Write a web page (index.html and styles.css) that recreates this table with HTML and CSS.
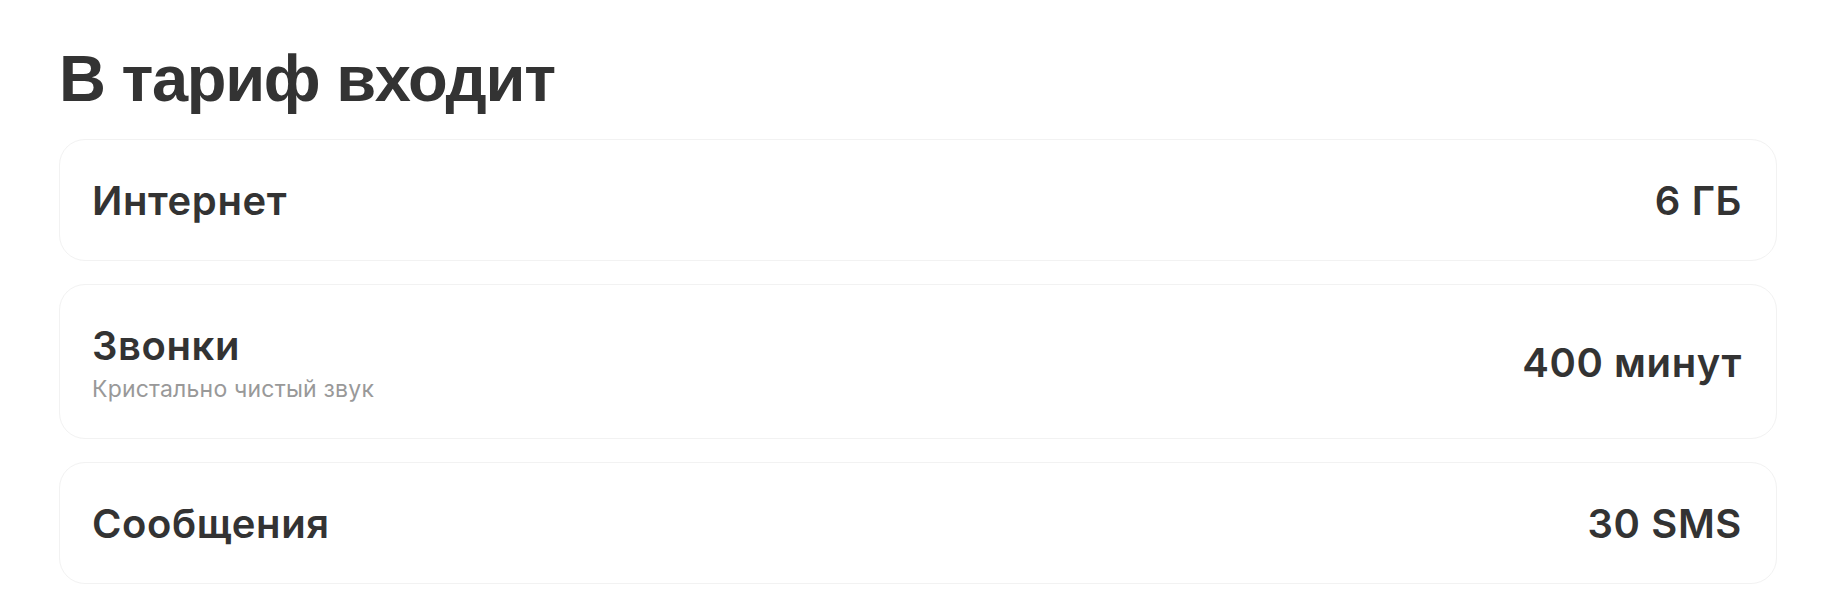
FILE: index.html
```html
<!DOCTYPE html>
<html lang="ru">
<head>
    <meta charset="UTF-8">
    <meta name="viewport" content="width=device-width, initial-scale=1.0">
    <title>В тариф входит</title>
    <link rel="stylesheet" href="styles.css">
</head>
<body>
    <main class="tariff">
        <h1>В тариф входит</h1>
        <ul class="features">
            <li class="feature">
                <div class="feature-info">
                    <span class="feature-name">Интернет</span>
                </div>
                <span class="feature-value">6 ГБ</span>
            </li>
            <li class="feature">
                <div class="feature-info">
                    <span class="feature-name">Звонки</span>
                    <span class="feature-note">Кристально чистый звук</span>
                </div>
                <span class="feature-value">400 минут</span>
            </li>
            <li class="feature">
                <div class="feature-info">
                    <span class="feature-name">Сообщения</span>
                </div>
                <span class="feature-value">30 SMS</span>
            </li>
        </ul>
    </main>
</body>
</html>
```

FILE: styles.css
```css
body {
    font-family: "Liberation Sans", Arial, sans-serif;
    color: #333;
    background-color: #fff;
    margin: 0;
    padding: 0;
}

.tariff {
    padding: 0 59px;
}

h1 {
    font-size: 65px;
    font-weight: 700;
    letter-spacing: -1.3px;
    line-height: 1;
    margin: 0;
    padding: 46px 0 28px;
}

.features {
    list-style: none;
    margin: 0;
    padding: 0;
    display: flex;
    flex-direction: column;
    gap: 23px;
}

.feature {
    display: flex;
    align-items: center;
    justify-content: space-between;
    border: 1px solid #f2f2f2;
    border-radius: 26px;
    padding: 37px 34px 35px 32px;
}

.feature-info {
    display: flex;
    flex-direction: column;
    gap: 6px;
}

.feature-name,
.feature-value {
    font-family: Inter, "Liberation Sans", sans-serif;
    font-size: 40px;
    font-weight: 600;
    letter-spacing: 0.6px;
    line-height: 48px;
}

.feature-note {
    font-family: Inter, "Liberation Sans", sans-serif;
    font-size: 23px;
    letter-spacing: 0.2px;
    line-height: 27px;
    color: #999;
}
```
